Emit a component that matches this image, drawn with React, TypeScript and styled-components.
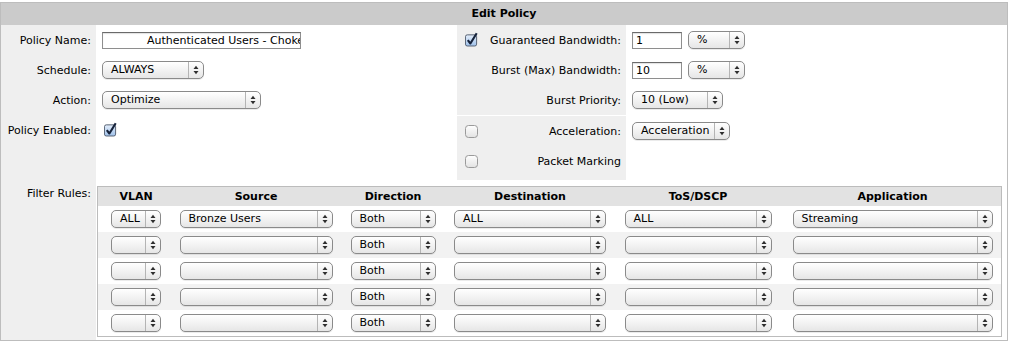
import styled, { createGlobalStyle } from 'styled-components';

const GlobalStyle = createGlobalStyle`
  body {
    margin: 0;
    background: #fff;
    font-family: Verdana, "DejaVu Sans", sans-serif;
    font-size: 11px;
    color: #000;
  }
`;

const Panel = styled.div`
  width: 1008px;
  margin-top: 2px;
  border: 1px solid #bdbdbd;
  box-sizing: border-box;
`;

const Title = styled.div`
  height: 22px;
  line-height: 22px;
  background: #cbcbcb;
  text-align: center;
  font-weight: bold;
`;

const Top = styled.div`
  display: flex;
`;

const Side = styled.div<{ $width?: number }>`
  display: flex;
  ${(p) => (p.$width ? `width: ${p.$width}px;` : 'flex: 1;')}
`;

const LabelCol = styled.div<{ $width: number }>`
  width: ${(p) => p.$width}px;
  flex-shrink: 0;
  background: #efefef;
  padding-bottom: 4px;
`;

const FieldCol = styled.div`
  flex: 1;
`;

const Label = styled.div`
  height: 30px;
  display: flex;
  align-items: center;
  justify-content: flex-end;
  padding-right: 5px;
  white-space: nowrap;
`;

const OptionGroup = styled.div<{ $divided?: boolean }>`
  border-top: ${(p) => (p.$divided ? '1px solid #fff' : 'none')};
`;

const OptionRow = styled.div`
  height: 30px;
  display: flex;
  align-items: center;
  padding: 0 5px 0 8px;
  white-space: nowrap;
`;

const OptionText = styled.span`
  margin-left: auto;
`;

const CheckSlot = styled.span`
  width: 13px;
  height: 13px;
  display: inline-flex;
`;

const Field = styled.div`
  height: 30px;
  display: flex;
  align-items: center;
  gap: 6px;
  padding-left: 6px;
`;

const Divider = styled.div`
  height: 1px;
`;

const TextField = styled.div<{ $w: number; $indent?: number }>`
  width: ${(p) => p.$w}px;
  height: 17px;
  box-sizing: border-box;
  border: 1px solid #8e8e8e;
  border-top-color: #6a6a6a;
  background: #fff;
  padding-left: ${(p) => p.$indent ?? 3}px;
  line-height: 15px;
  overflow: hidden;
  white-space: nowrap;
  box-shadow: inset 0 1px 1px rgba(0, 0, 0, 0.12);
`;

const SelectShell = styled.div<{ $w: number }>`
  width: ${(p) => p.$w}px;
  height: 18px;
  box-sizing: border-box;
  border: 1px solid #8a8a8a;
  border-radius: 5px;
  background: linear-gradient(#ffffff, #f4f4f4 45%, #e6e6e6 100%);
  box-shadow: 0 1px 0 rgba(0, 0, 0, 0.08);
  display: flex;
  align-items: stretch;
  flex-shrink: 0;
`;

const SelectText = styled.span`
  flex: 1;
  padding-left: 8px;
  line-height: 16px;
  overflow: hidden;
  white-space: nowrap;
`;

const SelectArrow = styled.span`
  width: 14px;
  border-left: 1px solid #b4b4b4;
  display: flex;
  align-items: center;
  justify-content: center;
`;

const BoxCheck = styled.svg`
  display: block;
`;

const Filter = styled.div`
  display: flex;
`;

const FilterLabel = styled.div`
  width: 95px;
  flex-shrink: 0;
  background: #efefef;
  text-align: right;
  padding: 7px 5px 0 0;
  box-sizing: border-box;
`;

const RulesTable = styled.div`
  flex: 1;
  margin: 6px 5px 3px 1px;
  border: 1px solid #bcbcbc;
`;

const RulesRow = styled.div<{ $striped?: boolean }>`
  display: grid;
  grid-template-columns: 76px 164px 110px 164px 172px 1fr;
  height: 26px;
  align-items: center;
  justify-items: center;
  background: ${(p) => (p.$striped ? '#f2f2f2' : '#fff')};
`;

const RulesHead = styled(RulesRow)`
  height: 19px;
  background: #e2e2e2;
  font-weight: bold;
`;

function Select({ width, value = '' }: { width: number; value?: string }) {
  return (
    <SelectShell $w={width}>
      <SelectText>{value}</SelectText>
      <SelectArrow>
        <svg width="6" height="10" viewBox="0 0 6 10">
          <path d="M0.5 4 L3 0.8 L5.5 4Z M0.5 6 L3 9.2 L5.5 6Z" fill="#2e2e2e" />
        </svg>
      </SelectArrow>
    </SelectShell>
  );
}

function Checkbox({ checked }: { checked?: boolean }) {
  if (checked) {
    return (
      <CheckSlot>
        <BoxCheck width="14" height="15" viewBox="0 0 14 15" style={{ marginTop: -2 }}>
          <defs>
            <linearGradient id="cbOn" x1="0" y1="0" x2="0" y2="1">
              <stop offset="0" stopColor="#e4eefb" />
              <stop offset="1" stopColor="#9fc1ea" />
            </linearGradient>
          </defs>
          <rect x="0.5" y="2.5" width="12" height="12" rx="2" fill="url(#cbOn)" stroke="#4f5a6b" />
          <path d="M3 8.2 L5.8 11.8 L12.6 0.8" fill="none" stroke="#16233b" strokeWidth="2.3" strokeLinejoin="round" />
        </BoxCheck>
      </CheckSlot>
    );
  }
  return (
    <CheckSlot>
      <BoxCheck width="13" height="13" viewBox="0 0 13 13">
        <defs>
          <linearGradient id="cbOff" x1="0" y1="0" x2="0" y2="1">
            <stop offset="0" stopColor="#ffffff" />
            <stop offset="1" stopColor="#e2e2e2" />
          </linearGradient>
        </defs>
        <rect x="0.5" y="0.5" width="12" height="12" rx="3" fill="url(#cbOff)" stroke="#9a9a9a" />
      </BoxCheck>
    </CheckSlot>
  );
}

const rules = [
  { vlan: 'ALL', source: 'Bronze Users', direction: 'Both', dest: 'ALL', tos: 'ALL', app: 'Streaming' },
  { vlan: '', source: '', direction: 'Both', dest: '', tos: '', app: '' },
  { vlan: '', source: '', direction: 'Both', dest: '', tos: '', app: '' },
  { vlan: '', source: '', direction: 'Both', dest: '', tos: '', app: '' },
  { vlan: '', source: '', direction: 'Both', dest: '', tos: '', app: '' },
];

export default function App() {
  return (
    <>
      <GlobalStyle />
      <Panel>
        <Title>Edit Policy</Title>
        <Top>
          <Side $width={456}>
            <LabelCol $width={95}>
              <Label>Policy Name:</Label>
              <Label>Schedule:</Label>
              <Label>Action:</Label>
              <Label>Policy Enabled:</Label>
            </LabelCol>
            <FieldCol>
              <Field>
                <TextField $w={199} $indent={44}>Authenticated Users - Choke Bronze</TextField>
              </Field>
              <Field>
                <Select width={102} value="ALWAYS" />
              </Field>
              <Field>
                <Select width={159} value="Optimize" />
              </Field>
              <Field style={{ paddingLeft: 8 }}>
                <Checkbox checked />
              </Field>
            </FieldCol>
          </Side>
          <Side>
            <LabelCol $width={169}>
              <OptionGroup>
                <OptionRow>
                  <Checkbox checked />
                  <OptionText>Guaranteed Bandwidth:</OptionText>
                </OptionRow>
                <OptionRow>
                  <OptionText>Burst (Max) Bandwidth:</OptionText>
                </OptionRow>
                <OptionRow>
                  <OptionText>Burst Priority:</OptionText>
                </OptionRow>
              </OptionGroup>
              <OptionGroup $divided>
                <OptionRow>
                  <Checkbox />
                  <OptionText>Acceleration:</OptionText>
                </OptionRow>
                <OptionRow>
                  <Checkbox />
                  <OptionText>Packet Marking</OptionText>
                </OptionRow>
              </OptionGroup>
            </LabelCol>
            <FieldCol>
              <Field>
                <TextField $w={50}>1</TextField>
                <Select width={57} value="%" />
              </Field>
              <Field>
                <TextField $w={50}>10</TextField>
                <Select width={57} value="%" />
              </Field>
              <Field>
                <Select width={91} value="10 (Low)" />
              </Field>
              <Divider />
              <Field>
                <Select width={98} value="Acceleration" />
              </Field>
            </FieldCol>
          </Side>
        </Top>
        <Filter>
          <FilterLabel>Filter Rules:</FilterLabel>
          <RulesTable>
            <RulesHead>
              <span>VLAN</span>
              <span>Source</span>
              <span>Direction</span>
              <span>Destination</span>
              <span>ToS/DSCP</span>
              <span>Application</span>
            </RulesHead>
            {rules.map((r, i) => (
              <RulesRow key={i} $striped={i % 2 === 1}>
                <Select width={50} value={r.vlan} />
                <Select width={153} value={r.source} />
                <Select width={85} value={r.direction} />
                <Select width={152} value={r.dest} />
                <Select width={147} value={r.tos} />
                <Select width={200} value={r.app} />
              </RulesRow>
            ))}
          </RulesTable>
        </Filter>
      </Panel>
    </>
  );
}
